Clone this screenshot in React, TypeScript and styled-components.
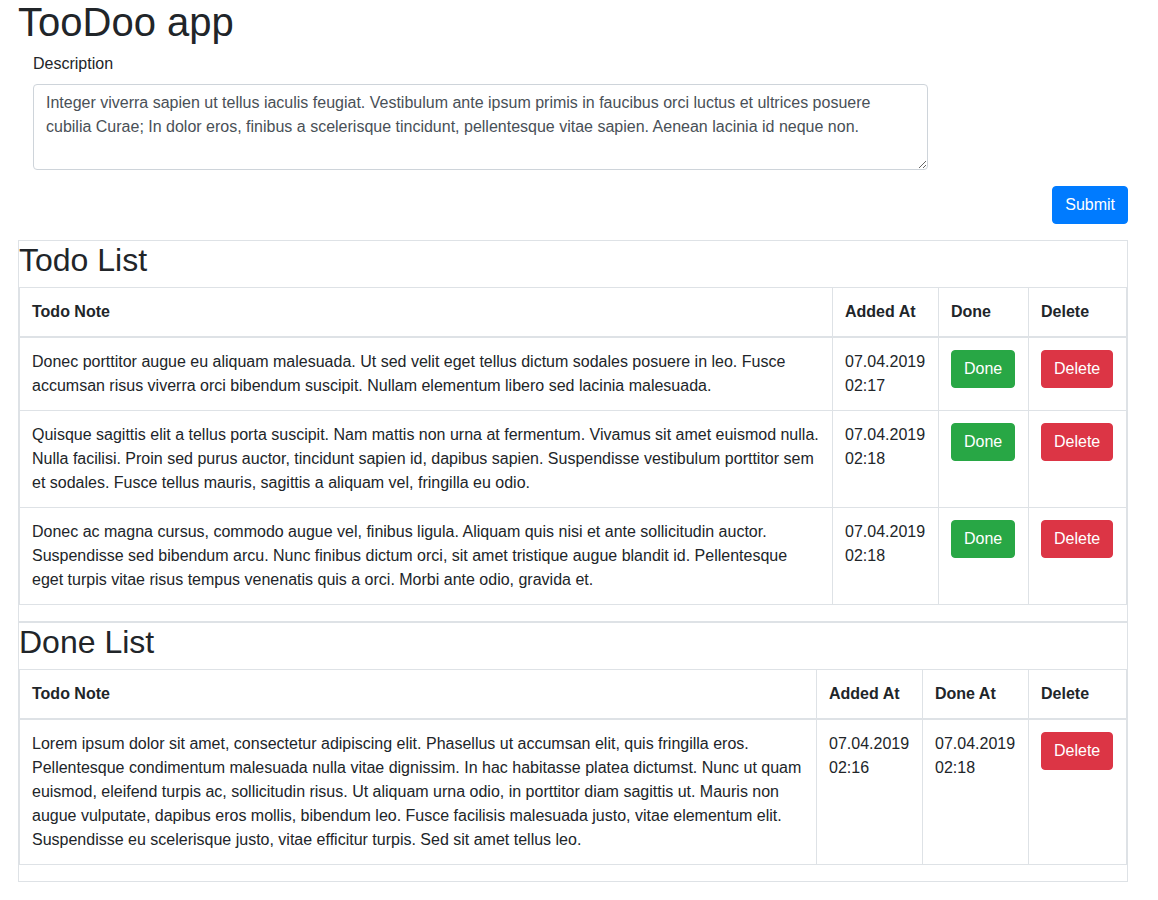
import styled, { createGlobalStyle } from 'styled-components';

interface TodoItem {
  id: number;
  note: string;
  addedAt: string;
  doneAt?: string;
}

const todos: TodoItem[] = [
  {
    id: 1,
    note: 'Donec porttitor augue eu aliquam malesuada. Ut sed velit eget tellus dictum sodales posuere in leo. Fusce accumsan risus viverra orci bibendum suscipit. Nullam elementum libero sed lacinia malesuada.',
    addedAt: '07.04.2019 02:17',
  },
  {
    id: 2,
    note: 'Quisque sagittis elit a tellus porta suscipit. Nam mattis non urna at fermentum. Vivamus sit amet euismod nulla. Nulla facilisi. Proin sed purus auctor, tincidunt sapien id, dapibus sapien. Suspendisse vestibulum porttitor sem et sodales. Fusce tellus mauris, sagittis a aliquam vel, fringilla eu odio.',
    addedAt: '07.04.2019 02:18',
  },
  {
    id: 3,
    note: 'Donec ac magna cursus, commodo augue vel, finibus ligula. Aliquam quis nisi et ante sollicitudin auctor. Suspendisse sed bibendum arcu. Nunc finibus dictum orci, sit amet tristique augue blandit id. Pellentesque eget turpis vitae risus tempus venenatis quis a orci. Morbi ante odio, gravida et.',
    addedAt: '07.04.2019 02:18',
  },
];

const done: TodoItem[] = [
  {
    id: 4,
    note: 'Lorem ipsum dolor sit amet, consectetur adipiscing elit. Phasellus ut accumsan elit, quis fringilla eros. Pellentesque condimentum malesuada nulla vitae dignissim. In hac habitasse platea dictumst. Nunc ut quam euismod, eleifend turpis ac, sollicitudin risus. Ut aliquam urna odio, in porttitor diam sagittis ut. Mauris non augue vulputate, dapibus eros mollis, bibendum leo. Fusce facilisis malesuada justo, vitae elementum elit. Suspendisse eu scelerisque justo, vitae efficitur turpis. Sed sit amet tellus leo.',
    addedAt: '07.04.2019 02:16',
    doneAt: '07.04.2019 02:18',
  },
];

const GlobalStyle = createGlobalStyle`
  *, *::before, *::after { box-sizing: border-box; }
  body {
    margin: 0;
    font-family: "Liberation Sans", Arial, sans-serif;
    font-size: 16px;
    line-height: 1.5;
    color: #212529;
    background: #fff;
  }
`;

const Page = styled.div`
  width: 1110px;
  margin-left: 18px;
`;

const Title = styled.h1`
  margin: 0 0 8px;
  font-size: 40px;
  font-weight: 400;
  line-height: 44px;
`;

const Form = styled.form`
  display: flex;
  flex-direction: column;
`;

const FormGroup = styled.div`
  padding: 0 15px;
  margin-bottom: 16px;
`;

const Label = styled.label`
  display: block;
  margin-bottom: 8px;
`;

const TextArea = styled.textarea`
  display: block;
  width: 895px;
  height: 86px;
  padding: 6px 12px;
  font-family: inherit;
  font-size: 16px;
  line-height: 1.5;
  color: #495057;
  border: 1px solid #ced4da;
  border-radius: 4px;
  background: #fff;
`;

const Actions = styled.div`
  display: flex;
  justify-content: flex-end;
  margin-bottom: 16px;
`;

const Button = styled.button<{ $variant: 'primary' | 'success' | 'danger' }>`
  display: inline-block;
  padding: 6px 12px;
  font-family: inherit;
  font-size: 16px;
  line-height: 1.5;
  color: #fff;
  border-radius: 4px;
  cursor: pointer;
  background: ${p => (p.$variant === 'primary' ? '#007bff' : p.$variant === 'success' ? '#28a745' : '#dc3545')};
  border: 1px solid ${p => (p.$variant === 'primary' ? '#007bff' : p.$variant === 'success' ? '#28a745' : '#dc3545')};
`;

const Section = styled.section`
  border: 1px solid #dee2e6;
`;

const SectionTitle = styled.h2`
  margin: 0 0 8px;
  font-size: 32px;
  font-weight: 400;
  line-height: 38px;
`;

const Table = styled.table`
  width: 100%;
  margin-bottom: 16px;
  border-collapse: collapse;
  border: 1px solid #dee2e6;
`;

const Th = styled.th<{ $width?: number }>`
  width: ${p => (p.$width ? `${p.$width}px` : 'auto')};
  padding: 12px;
  text-align: left;
  font-weight: 700;
  vertical-align: bottom;
  border: 1px solid #dee2e6;
  border-bottom: 2px solid #dee2e6;
`;

const Td = styled.td`
  padding: 12px;
  vertical-align: top;
  border: 1px solid #dee2e6;
`;

const App = () => {
  return (
    <>
      <GlobalStyle />
      <Page>
        <Title>TooDoo app</Title>
        <Form onSubmit={e => e.preventDefault()}>
          <FormGroup>
            <Label htmlFor="description">Description</Label>
            <TextArea
              id="description"
              rows={3}
              defaultValue="Integer viverra sapien ut tellus iaculis feugiat. Vestibulum ante ipsum primis in faucibus orci luctus et ultrices posuere cubilia Curae; In dolor eros, finibus a scelerisque tincidunt, pellentesque vitae sapien. Aenean lacinia id neque non."
            />
          </FormGroup>
          <Actions>
            <Button $variant="primary" type="submit">Submit</Button>
          </Actions>
        </Form>

        <Section>
          <SectionTitle>Todo List</SectionTitle>
          <Table>
            <thead>
              <tr>
                <Th>Todo Note</Th>
                <Th $width={106}>Added At</Th>
                <Th $width={90}>Done</Th>
                <Th $width={98}>Delete</Th>
              </tr>
            </thead>
            <tbody>
              {todos.map(todo => (
                <tr key={todo.id}>
                  <Td>{todo.note}</Td>
                  <Td>{todo.addedAt}</Td>
                  <Td><Button $variant="success">Done</Button></Td>
                  <Td><Button $variant="danger">Delete</Button></Td>
                </tr>
              ))}
            </tbody>
          </Table>
        </Section>

        <Section>
          <SectionTitle>Done List</SectionTitle>
          <Table>
            <thead>
              <tr>
                <Th>Todo Note</Th>
                <Th $width={106}>Added At</Th>
                <Th $width={106}>Done At</Th>
                <Th $width={98}>Delete</Th>
              </tr>
            </thead>
            <tbody>
              {done.map(todo => (
                <tr key={todo.id}>
                  <Td>{todo.note}</Td>
                  <Td>{todo.addedAt}</Td>
                  <Td>{todo.doneAt}</Td>
                  <Td><Button $variant="danger">Delete</Button></Td>
                </tr>
              ))}
            </tbody>
          </Table>
        </Section>
      </Page>
    </>
  );
};

export default App;
